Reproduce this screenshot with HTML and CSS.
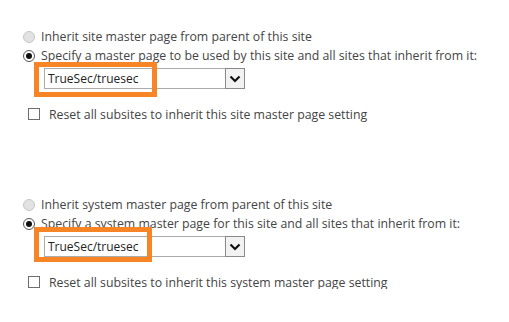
FILE: index.html
```html
<!DOCTYPE html>
<html lang="en">
<head>
    <meta charset="UTF-8">
    <title>Master Page Settings</title>
    <link rel="stylesheet" href="styles.css">
</head>
<body>
    <div class="settings">
        <div class="group">
            <label class="option"><span class="radio"></span>Inherit site master page from parent of this site</label>
            <label class="option"><span class="radio checked"></span>Specify a master page to be used by this site and all sites that inherit from it:</label>
            <div class="picker picker-site">
                <div class="select">
                    <span class="value">TrueSec/truesec</span>
                    <span class="arrow">
                        <svg width="12" height="8" viewBox="0 0 12 8"><path d="M1.5 1.5 L6 6 L10.5 1.5" fill="none" stroke="#111" stroke-width="2.2"/></svg>
                    </span>
                </div>
                <div class="highlight"></div>
            </div>
            <label class="check"><span class="box"></span>Reset all subsites to inherit this site master page setting</label>
        </div>

        <div class="group">
            <label class="option"><span class="radio"></span>Inherit system master page from parent of this site</label>
            <label class="option"><span class="radio checked"></span>Specify a system master page for this site and all sites that inherit from it:</label>
            <div class="picker picker-system">
                <div class="select">
                    <span class="value">TrueSec/truesec</span>
                    <span class="arrow">
                        <svg width="12" height="8" viewBox="0 0 12 8"><path d="M1.5 1.5 L6 6 L10.5 1.5" fill="none" stroke="#111" stroke-width="2.2"/></svg>
                    </span>
                </div>
                <div class="highlight"></div>
            </div>
            <label class="check"><span class="box"></span>Reset all subsites to inherit this system master page setting</label>
        </div>
    </div>
</body>
</html>
```

FILE: styles.css
```css
* {
    margin: 0;
    padding: 0;
    box-sizing: border-box;
}

body {
    background: #fff;
    color: #444;
    font-family: 'Open Sans', 'Noto Sans', sans-serif;
    font-size: 12.3px;
}

.settings {
    padding: 27px 0 0 23px;
    display: flex;
    flex-direction: column;
    gap: 74px;
}

.group {
    display: flex;
    flex-direction: column;
}

.option {
    display: flex;
    align-items: center;
    gap: 6px;
    height: 19px;
    white-space: nowrap;
}

.radio {
    width: 12px;
    height: 12px;
    border-radius: 50%;
    border: 1px solid #c6c6c6;
    background: #e2e2e2;
    flex: none;
    display: grid;
    place-items: center;
}

.radio.checked {
    background: #fff;
    border-color: #555;
}

.radio.checked::after {
    content: "";
    width: 6px;
    height: 6px;
    border-radius: 50%;
    background: #111;
}

.picker {
    position: relative;
    margin: 3px 0 0 21px;
    width: 201px;
}

.select {
    display: flex;
    height: 21px;
    border: 1px solid #ababab;
    background: #fff;
}

.value {
    flex: 1;
    padding-left: 3px;
    color: #222;
    font-size: 12px;
    line-height: 19px;
}

.arrow {
    width: 20px;
    margin: -1px -1px -1px 0;
    border: 1px solid #8a8a8a;
    background: #f2f2f2;
    display: grid;
    place-items: center;
}

.highlight {
    position: absolute;
    border: 5px solid #f78526;
}

.picker-site .highlight {
    left: -10px;
    top: -6px;
    width: 123px;
    height: 35px;
}

.picker-system .highlight {
    left: -10px;
    top: -9px;
    width: 118px;
    height: 35px;
}

.check {
    display: flex;
    align-items: center;
    gap: 9px;
    margin: 18px 0 0 5px;
    height: 14px;
    white-space: nowrap;
}

.box {
    width: 12px;
    height: 12px;
    border: 1px solid #6e6e6e;
    background: #fff;
    flex: none;
}
```
